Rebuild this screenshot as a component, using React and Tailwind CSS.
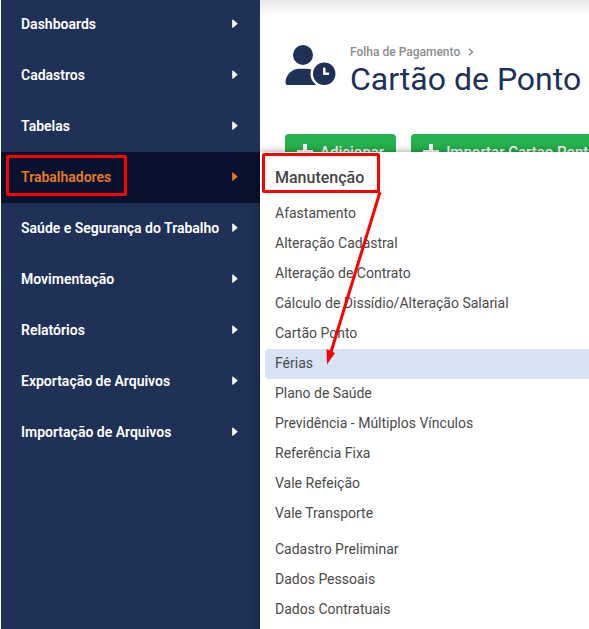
import React from 'react';
import { FaUserClock } from 'react-icons/fa6';

const menuItems = [
  'Dashboards',
  'Cadastros',
  'Tabelas',
  'Trabalhadores',
  'Saúde e Segurança do Trabalho',
  'Movimentação',
  'Relatórios',
  'Exportação de Arquivos',
  'Importação de Arquivos',
];

const maintenanceItems = [
  'Afastamento',
  'Alteração Cadastral',
  'Alteração de Contrato',
  'Cálculo de Dissídio/Alteração Salarial',
  'Cartão Ponto',
  'Férias',
  'Plano de Saúde',
  'Previdência - Múltiplos Vínculos',
  'Referência Fixa',
  'Vale Refeição',
  'Vale Transporte',
];

const registrationItems = ['Cadastro Preliminar', 'Dados Pessoais', 'Dados Contratuais'];

const SubmenuList = ({ items, selected }) => (
  <ul>
    {items.map((item) => (
      <li key={item}>
        <a
          href="#"
          className={`flex h-[30px] items-center rounded px-2.5 pb-0.5 text-sm text-[#4a4a4a] ${
            item === selected ? 'bg-[#d8e4f5]' : ''
          }`}
        >
          {item}
        </a>
      </li>
    ))}
  </ul>
);

const Submenu = () => (
  <div className="absolute left-full top-0 z-20 w-screen bg-white px-[5px] pb-6 shadow-[0_0_8px_rgba(0,0,0,0.4)]">
    <h2 className="flex h-[47px] items-center px-2.5 pb-1 pt-2 text-base font-medium text-[#444]">
      Manutenção
    </h2>
    <div className="flex flex-col gap-1.5">
      <SubmenuList items={maintenanceItems} selected="Férias" />
      <SubmenuList items={registrationItems} />
    </div>

    {/* Callout box and arrow down to Férias */}
    <span className="pointer-events-none absolute left-0.5 top-px h-10 w-[118px] rounded-xs border-3 border-[#ff0000]" />
    <svg
      className="pointer-events-none absolute left-0 top-0"
      width="130"
      height="220"
      viewBox="0 0 130 220"
      aria-hidden="true"
    >
      <path d="M120 40 L71 200" stroke="#ff0000" strokeWidth="3" fill="none" />
      <path d="M67 212.500 L66.500 197 L75 201 Z" fill="#ff0000" />
    </svg>
  </div>
);

const Caret = () => (
  <svg width="6" height="9" viewBox="0 0 6 9" fill="currentColor" aria-hidden="true">
    <path d="M0.200 1 Q0.200 0.300 0.900 0.600 L5.400 4.300 Q5.700 4.700 5.400 5 L0.900 8.800 Q0.200 9 0.200 8.300 Z" />
  </svg>
);

const Sidebar = () => (
  <nav className="relative z-10 ml-px w-[259px] shrink-0 bg-[#203157]">
    <ul className="-mt-px">
      {menuItems.map((item) => {
        const active = item === 'Trabalhadores';
        return (
          <li key={item} className="relative">
            <a
              href="#"
              className={`flex h-[51px] items-center justify-between pb-0.5 pl-5 pr-[22px] text-sm font-semibold ${
                active ? 'bg-[#09112e] text-[#e87b1c]' : 'text-white'
              }`}
            >
              {item}
              <Caret />
            </a>
            {active && (
              <>
                <span className="pointer-events-none absolute left-[5px] top-[3px] h-[41px] w-[121px] rounded-xs border-3 border-[#ff0000]" />
                <Submenu />
              </>
            )}
          </li>
        );
      })}
    </ul>
  </nav>
);

const ActionButton = ({ children }) => (
  <button
    type="button"
    className="flex h-9 shrink-0 items-center gap-[7px] whitespace-nowrap rounded bg-[#25b14d] px-3 text-[15px] font-medium text-white"
  >
    <svg className="size-4" viewBox="0 0 16 16" fill="none" stroke="currentColor" strokeWidth="4" aria-hidden="true">
      <path d="M8 0 V16 M0 8 H16" />
    </svg>
    {children}
  </button>
);

const App = () => {
  return (
    <div className="flex min-h-screen overflow-hidden bg-white font-[Roboto,sans-serif]">
      <Sidebar />

      <main className="min-w-0 flex-1">
        <div className="h-4 bg-linear-to-b from-[#e8e8e8] to-white" />

        <header className="flex items-start gap-3.5 pl-[25px] pt-6">
          <FaUserClock className="mt-[5px] h-10 w-[51px] shrink-0 text-[#203157]" />
          <div className="whitespace-nowrap">
            <p className="flex h-6 items-center gap-2 text-xs font-medium text-[#8c8c8c]">
              Folha de Pagamento
              <svg width="6" height="8" viewBox="0 0 6 8" fill="none" stroke="currentColor" strokeWidth="1.500" aria-hidden="true">
                <path d="M1 0.700 L4.500 4 L1 7.300" />
              </svg>
            </p>
            <h1 className="text-[32px] leading-[30px] text-[#203157]">Cartão de Ponto</h1>
          </div>
        </header>

        <div className="mt-10 flex gap-[15px] pl-[25px]">
          <ActionButton>Adicionar</ActionButton>
          <ActionButton>Importar Cartao Ponto</ActionButton>
        </div>
      </main>
    </div>
  );
};

export default App;
